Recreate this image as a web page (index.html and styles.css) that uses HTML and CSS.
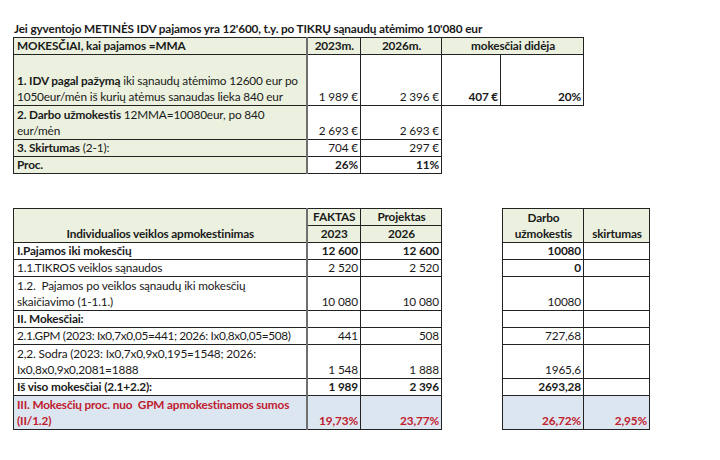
FILE: index.html
```html
<!DOCTYPE html>
<html lang="lt">
<head>
    <meta charset="UTF-8">
    <meta name="viewport" content="width=device-width, initial-scale=1.0">
    <title>IDV mokesčiai</title>
    <link rel="stylesheet" href="styles.css">
</head>
<body>
    <div class="sheet">
        <div class="title">Jei gyventojo METINĖS IDV pajamos yra 12'600, t.y. po TIKRŲ sąnaudų atėmimo 10'080 eur</div>

        <table class="grid top">
            <colgroup>
                <col class="c-label">
                <col class="c-y1">
                <col class="c-y2">
                <col class="c-d1">
                <col class="c-d2">
            </colgroup>
            <tr class="h1">
                <td class="green b">MOKESČIAI, kai pajamos =MMA</td>
                <td class="green b mid sep">2023m.</td>
                <td class="green b mid">2026m.</td>
                <td class="green b mid" colspan="2">mokesčiai didėja</td>
            </tr>
            <tr class="h3">
                <td class="green"><b>1. IDV pagal pažymą</b> iki sąnaudų atėmimo 12600 eur po<br>1050eur/mėn iš kurių atėmus sanaudas lieka 840 eur</td>
                <td class="num sep">1 989 €</td>
                <td class="num">2 396 €</td>
                <td class="num b">407 €</td>
                <td class="num b">20%</td>
            </tr>
            <tr class="h2">
                <td class="green"><b>2. Darbo užmokestis</b> 12MMA=10080eur, po 840<br>eur/mėn</td>
                <td class="num sep">2 693 €</td>
                <td class="num">2 693 €</td>
                <td class="blank" colspan="2"></td>
            </tr>
            <tr class="h1">
                <td class="green"><b>3. Skirtumas</b> (2-1):</td>
                <td class="num sep">704 €</td>
                <td class="num">297 €</td>
                <td class="blank" colspan="2"></td>
            </tr>
            <tr class="h1">
                <td class="green b">Proc.</td>
                <td class="num b sep">26%</td>
                <td class="num b">11%</td>
                <td class="blank" colspan="2"></td>
            </tr>
        </table>

        <div class="lower">
            <table class="grid main">
                <colgroup>
                    <col class="c-label">
                    <col class="c-y1">
                    <col class="c-y2">
                </colgroup>
                <tr class="h1">
                    <td class="green b mid" rowspan="2">Individualios veiklos apmokestinimas</td>
                    <td class="green b mid sep">FAKTAS</td>
                    <td class="green b mid">Projektas</td>
                </tr>
                <tr class="h1">
                    <td class="green b mid sep">2023</td>
                    <td class="green b mid">2026</td>
                </tr>
                <tr class="h1">
                    <td class="b">I.Pajamos iki mokesčių</td>
                    <td class="num b sep">12 600</td>
                    <td class="num b">12 600</td>
                </tr>
                <tr class="h1">
                    <td>1.1.TIKROS veiklos sąnaudos</td>
                    <td class="num sep">2 520</td>
                    <td class="num">2 520</td>
                </tr>
                <tr class="h2">
                    <td>1.2.&nbsp; Pajamos po veiklos sąnaudų iki mokesčių<br>skaičiavimo (1-1.1.)</td>
                    <td class="num sep">10 080</td>
                    <td class="num">10 080</td>
                </tr>
                <tr class="h1">
                    <td class="b">II. Mokesčiai:</td>
                    <td class="sep"></td>
                    <td></td>
                </tr>
                <tr class="h1">
                    <td class="tight">2.1.GPM (2023: Ix0,7x0,05=441; 2026: Ix0,8x0,05=508)</td>
                    <td class="num sep">441</td>
                    <td class="num">508</td>
                </tr>
                <tr class="h2">
                    <td>2,2. Sodra (2023: Ix0,7x0,9x0,195=1548; 2026:<br>Ix0,8x0,9x0,2081=1888</td>
                    <td class="num sep">1 548</td>
                    <td class="num">1 888</td>
                </tr>
                <tr class="h1">
                    <td class="b">Iš viso mokesčiai (2.1+2.2):</td>
                    <td class="num b sep">1 989</td>
                    <td class="num b">2 396</td>
                </tr>
                <tr class="h2 blue">
                    <td class="b red">III. Mokesčių proc. nuo&nbsp; GPM apmokestinamos sumos<br>(II/1.2)</td>
                    <td class="num b red sep">19,73%</td>
                    <td class="num b red">23,77%</td>
                </tr>
            </table>

            <table class="grid side">
                <colgroup>
                    <col class="c-wage">
                    <col class="c-diff">
                </colgroup>
                <tr class="h1">
                    <td class="green b mid" rowspan="2">Darbo<br>užmokestis</td>
                    <td class="green b mid" rowspan="2">skirtumas</td>
                </tr>
                <tr class="h1"></tr>
                <tr class="h1">
                    <td class="num b">10080</td>
                    <td></td>
                </tr>
                <tr class="h1">
                    <td class="num b">0</td>
                    <td></td>
                </tr>
                <tr class="h2">
                    <td class="num">10080</td>
                    <td></td>
                </tr>
                <tr class="h1">
                    <td></td>
                    <td></td>
                </tr>
                <tr class="h1">
                    <td class="num">727,68</td>
                    <td></td>
                </tr>
                <tr class="h2">
                    <td class="num">1965,6</td>
                    <td></td>
                </tr>
                <tr class="h1">
                    <td class="num b">2693,28</td>
                    <td></td>
                </tr>
                <tr class="h2 blue">
                    <td class="num b red">26,72%</td>
                    <td class="num b red">2,95%</td>
                </tr>
            </table>
        </div>
    </div>
</body>
</html>
```

FILE: styles.css
```css
body,
html {
    margin: 0;
    padding: 0;
    background-color: white;
}

.sheet {
    padding: 20px 0 0 13px;
    font-family: Lato, "Open Sans", sans-serif;
    font-size: 11.8px;
    letter-spacing: -0.15px;
    color: #1a1a1a;
}

.title {
    height: 17px;
    line-height: 17px;
    padding-left: 1px;
    font-weight: bold;
    white-space: nowrap;
}

.grid {
    border-collapse: collapse;
    table-layout: fixed;
}

.grid td {
    border: 1px solid #222;
    padding: 0 2px 0 3px;
    line-height: 16px;
    vertical-align: bottom;
    white-space: nowrap;
    overflow: hidden;
}

.grid td.tight {
    letter-spacing: -0.35px;
}

.grid tr.h1 { height: 17px; }
.grid tr.h2 { height: 34px; }
.grid tr.h3 { height: 51px; }

.grid td.sep {
    border-left: 2px solid #6f6f6f;
}

.grid td.blank {
    border: none;
}

.top { width: 571px; }
.main { width: 429px; }
.side { width: 148px; }

.c-label { width: 293px; }
.c-y1 { width: 54px; }
.c-y2 { width: 81px; }
.c-d1 { width: 59px; }
.c-d2 { width: 83px; }
.c-wage { width: 81px; }
.c-diff { width: 66px; }

.lower {
    display: flex;
    align-items: flex-start;
    gap: 60px;
    margin-top: 34px;
}

.green { background-color: #ebf1de; }
.blue td { background-color: #dce6f1; }

.b { font-weight: bold; }
.mid { text-align: center; }
.num { text-align: right; }
.red { color: #c0202e; }
```
